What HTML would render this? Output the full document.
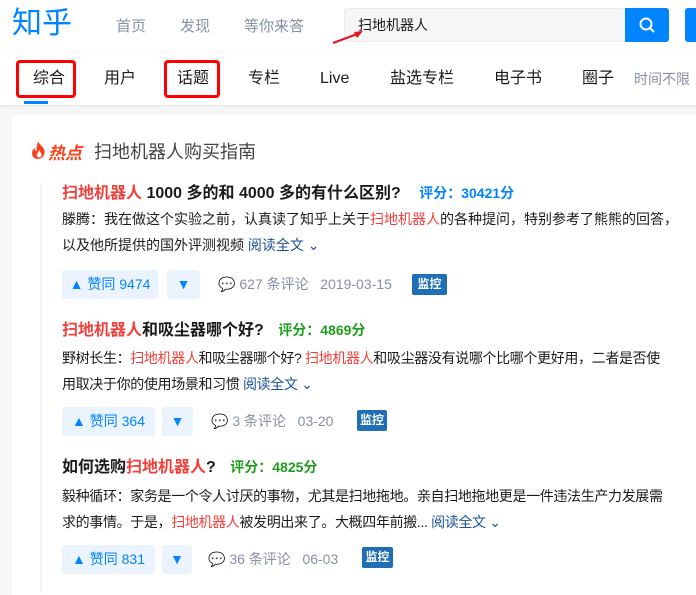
<!DOCTYPE html>
<html><head><meta charset="utf-8"><style>
*{margin:0;padding:0;box-sizing:border-box}
body{width:696px;height:584px;overflow:hidden;background:#f6f6f6;font-family:"Liberation Sans","Noto Sans CJK SC",sans-serif;position:relative;color:#1a1a1a}
.a{position:absolute;white-space:nowrap}
.r{color:#f1403c}
.btn{position:absolute;background:#ebf3ff;color:#0084ff;border-radius:3px;font-size:14px;height:29px;line-height:29px;text-align:center}
.meta{position:absolute;color:#8590a6;font-size:14px;line-height:20px;white-space:nowrap}
.tag{position:absolute;background:#1e6fb5;color:#fff;font-size:12px;font-weight:bold;border-radius:2px;height:21px;line-height:21px;text-align:center}
.ex{font-size:14px;line-height:26px;color:#1a1a1a}
.more{color:#175199}
.tab{font-size:16px;line-height:20px;top:69px}
</style></head><body>
<div class="a" style="left:0;top:0;width:696px;height:52px;background:#fff"></div>
<div class="a" style="left:12px;top:4px;font-size:30px;color:#0084ff;line-height:40px">知乎</div>
<div class="a" style="left:116px;top:15px;font-size:15px;color:#8590a6">首页</div>
<div class="a" style="left:180px;top:15px;font-size:15px;color:#8590a6">发现</div>
<div class="a" style="left:244px;top:15px;font-size:15px;color:#8590a6">等你来答</div>
<div class="a" style="left:344px;top:8px;width:282px;height:34px;background:#f6f6f6;border:1px solid #ebebeb;border-radius:3px 0 0 3px"></div>
<div class="a" style="left:358px;top:15px;font-size:14px">扫地机器人</div>
<div class="a" style="left:625px;top:8px;width:44px;height:34px;background:#0084ff;border-radius:0 3px 3px 0"></div>
<svg class="a" style="left:638px;top:16px" width="18" height="18" viewBox="0 0 18 18"><circle cx="8" cy="8" r="5.5" fill="none" stroke="#fff" stroke-width="2"/><path d="M12 12l4 4" stroke="#fff" stroke-width="2"/></svg>
<div class="a" style="left:685px;top:8px;width:20px;height:34px;background:#0084ff;border-radius:3px"></div>
<svg class="a" style="left:330px;top:26px" width="36" height="20"><path d="M3 17L30 7" stroke="#e3141d" stroke-width="2"/><path d="M33 5l-9 1 3 6z" fill="#e3141d"/></svg>
<div class="a" style="left:0;top:52px;width:696px;height:53px;background:#fff;box-shadow:0 1px 3px rgba(0,0,0,.08)"></div>
<div class="a tab" style="left:33px">综合</div>
<div class="a tab" style="left:104px">用户</div>
<div class="a tab" style="left:177px">话题</div>
<div class="a tab" style="left:248px">专栏</div>
<div class="a tab" style="left:320px">Live</div>
<div class="a tab" style="left:390px">盐选专栏</div>
<div class="a tab" style="left:494px">电子书</div>
<div class="a tab" style="left:582px">圈子</div>
<div class="a" style="left:634px;top:69px;font-size:14px;color:#8590a6">时间不限</div>
<div class="a" style="left:24px;top:101px;width:24px;height:3px;background:#0084ff"></div>
<div class="a" style="left:16px;top:60px;width:60px;height:38px;border:3px solid #f00;border-radius:4px"></div>
<div class="a" style="left:164px;top:60px;width:56px;height:38px;border:3px solid #f00;border-radius:4px"></div>
<div class="a" style="left:12px;top:115px;width:684px;height:480px;background:#fff"></div>
<svg class="a" style="left:30px;top:140px" width="18" height="20" viewBox="0 0 16 18"><path d="M7 1C9 5 14 7 13 12C12 16 9 17 7 17C3 17 1 14 2 10C3 8 4 7 4 7C4 9 5 10 6 10C5 6 7 4 7 1Z" fill="#f5441c"/><path d="M8 9C9 11 11 12 10 15C9 16 6 16 6 14C6 12 8 11 8 9Z" fill="#fff"/></svg>
<div class="a" style="left:48px;top:139px;font-size:17px;font-weight:bold;font-style:italic;color:#f5441c">热点</div>
<div class="a" style="left:94px;top:138px;font-size:18px;color:#444">扫地机器人购买指南</div>
<div class="a" style="left:40px;top:183px;width:2px;height:410px;background:#f4f4f4"></div>

<div class="a" style="left:62px;top:182px;font-size:16px;font-weight:bold;line-height:22px"><span class="r">扫地机器人</span> 1000 多的和 4000 多的有什么区别? <span style="color:#0084ff;font-size:14px;margin-left:14px">评分：30421分</span></div>
<div class="a ex" style="left:62px;top:206px">滕腾：我在做这个实验之前，认真读了知乎上关于<span class="r">扫地机器人</span>的各种提问，特别参考了熊熊的回答，<br>以及他所提供的国外评测视频 <span class="more">阅读全文 ⌄</span></div>
<div class="btn" style="left:62px;top:270px;width:96px">▲ 赞同 9474</div>
<div class="btn" style="left:167px;top:270px;width:33px">▼</div>
<div class="meta" style="left:218px;top:274px">💬 627 条评论 &nbsp;&nbsp;2019-03-15</div>
<div class="tag" style="left:412px;top:274px;width:35px">监控</div>

<div class="a" style="left:62px;top:319px;font-size:16px;font-weight:bold;line-height:22px"><span class="r">扫地机器人</span>和吸尘器哪个好? <span style="color:#1e9e1e;font-size:14px;margin-left:10px">评分：4869分</span></div>
<div class="a ex" style="left:62px;top:345px;letter-spacing:-0.35px">野树长生：<span class="r">扫地机器人</span>和吸尘器哪个好? <span class="r">扫地机器人</span>和吸尘器没有说哪个比哪个更好用，二者是否使<br>用取决于你的使用场景和习惯 <span class="more">阅读全文 ⌄</span></div>
<div class="btn" style="left:62px;top:407px;width:93px">▲ 赞同 364</div>
<div class="btn" style="left:162px;top:407px;width:31px">▼</div>
<div class="meta" style="left:211px;top:411px">💬 3 条评论 &nbsp;&nbsp;03-20</div>
<div class="tag" style="left:357px;top:410px;width:30px">监控</div>

<div class="a" style="left:62px;top:456px;font-size:16px;font-weight:bold;line-height:22px">如何选购<span class="r">扫地机器人</span>? <span style="color:#1e9e1e;font-size:14px;margin-left:10px">评分：4825分</span></div>
<div class="a ex" style="left:62px;top:483px;letter-spacing:-0.35px">毅种循环：家务是一个令人讨厌的事物，尤其是扫地拖地。亲自扫地拖地更是一件违法生产力发展需<br>求的事情。于是，<span class="r">扫地机器人</span>被发明出来了。大概四年前搬... <span class="more">阅读全文 ⌄</span></div>
<div class="btn" style="left:62px;top:545px;width:93px">▲ 赞同 831</div>
<div class="btn" style="left:162px;top:545px;width:30px">▼</div>
<div class="meta" style="left:208px;top:549px">💬 36 条评论 &nbsp;&nbsp;06-03</div>
<div class="tag" style="left:362px;top:547px;width:31px">监控</div>
</body></html>
